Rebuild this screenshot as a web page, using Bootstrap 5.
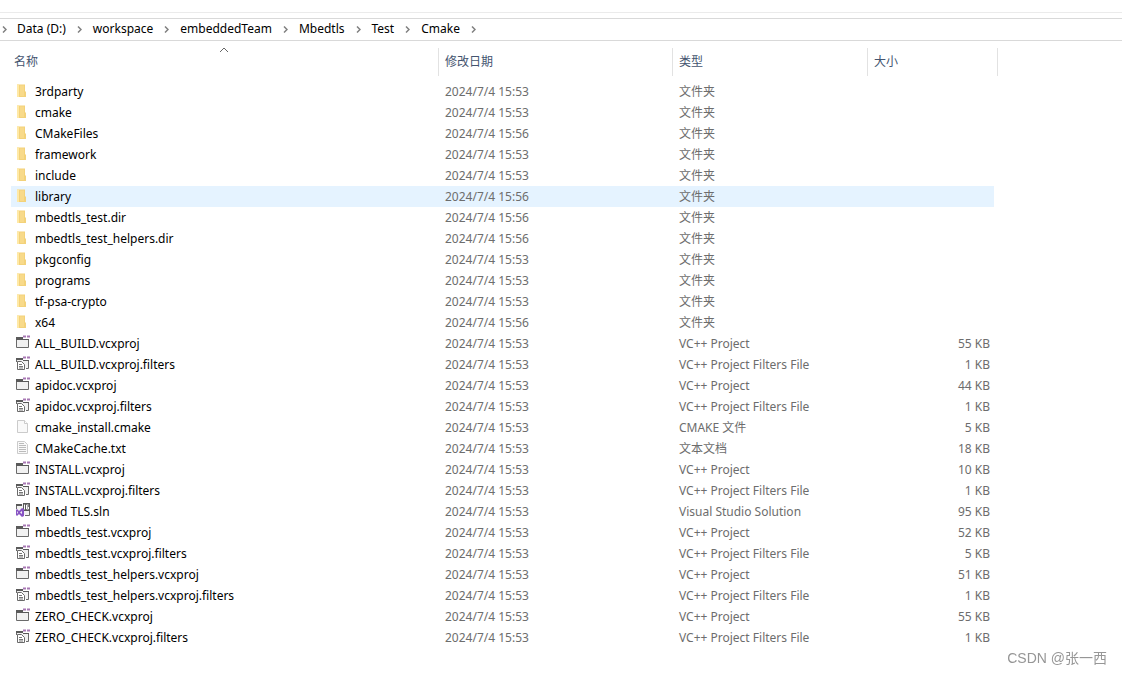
<!DOCTYPE html>
<html lang="zh-CN">
<head>
<meta charset="utf-8">
<meta name="viewport" content="width=device-width, initial-scale=1">
<title>Cmake</title>
<link href="https://cdn.jsdelivr.net/npm/bootstrap@5.3.0/dist/css/bootstrap.min.css" rel="stylesheet">
<style>
body{font-family:"Noto Sans","Noto Sans CJK SC",sans-serif;font-size:12px;line-height:20px;color:#000;background:#fff}
.ribbon-edge{height:13px;border-bottom:1px solid #ebebeb}
.address-bar{margin-top:5px;border-top:1px solid #d9d9d9;border-bottom:1px solid #d9d9d9;height:23px}
.address-bar a{color:#000;text-decoration:none;font-size:12px;line-height:20px}
.chev{width:27px;height:21px;display:block;flex:none}
.chev.first{width:17px}
.file-pane{padding-left:11px;padding-right:124px}
.file-table{table-layout:fixed;width:100%;border-collapse:collapse}
.file-table th{padding:7px 0 5px;font-weight:400;position:relative}
.head-cell{height:28px;border-right:1px solid #e2e2e2;padding-left:6px}
.head-cell button{color:#44546f;font-size:12px;line-height:28px;background:none;border:0;padding:0;display:block}
.file-table th:first-child .head-cell{padding-left:3px}
.sort-mark{position:absolute;top:5px;left:50%;margin-left:-6px}
.file-table td{height:21px;line-height:20px;padding:1px 0 0 6px;color:#6d6d6d;white-space:nowrap}
.file-table td:first-child{color:#000;padding-left:4px}
.file-table td:nth-child(4){text-align:right;padding-right:4px}
.file-table .hovered td{background:#e5f3ff}
.file-table td svg{width:16px;height:16px;display:block;margin:0 4px 4px 0;flex:none}
.c-date{width:234px}.c-type{width:195px}.c-size{width:126px}.c-end{width:4px}
.watermark{position:fixed;right:15px;bottom:6px;color:#969696;font-family:"Liberation Sans","Noto Sans CJK SC",sans-serif;font-size:14px;line-height:20px}
</style>
</head>
<body>
<svg width="0" height="0" class="d-none" aria-hidden="true">
<symbol id="folder" viewBox="0 0 16 16"><path fill="#f3d27a" d="M2 2.500h8v7h1V15H2z"/><path fill="#ffe9a6" d="M2 2.500h2V15H2z"/><path fill="#f8da8a" d="M5 3.500h4V14H5z"/></symbol>
<symbol id="proj" viewBox="0 0 16 16"><path fill="#f1f1f1" d="M2 6h11v7H2z"/><path fill="none" stroke="#6a6a6a" d="M1.500 4v9.500h12V6"/><path fill="#5a5a5a" d="M1 3h7v3H1zM8 5h6v1H8z"/><path fill="#a878b4" d="M8 1.500h3v2H8zM12 1.500h3v2h-3z"/></symbol>
<symbol id="filt" viewBox="0 0 16 16"><path fill="#f1f1f1" d="M2 5h11v8H2z"/><path fill="none" stroke="#6a6a6a" d="M1.500 7V4M13.500 6v7.500H11"/><path fill="#5a5a5a" d="M1 3h7v2H1zM8 5h6v1H8z"/><path fill="#fff" stroke="#6a6a6a" d="M2.500 6.500h4l3 3v5h-7z"/><path stroke="#777" d="M4 9.500h3M4 11.500h4M4 13h4"/><path fill="#a878b4" d="M8 1.500h3v2H8zM12 1.500h3v2h-3z"/></symbol>
<symbol id="blank" viewBox="0 0 16 16"><path fill="#f9f9f9" stroke="#cbcbcb" d="M2.500 2.500h7l3 3v9h-10z"/><path fill="#fff" stroke="#cbcbcb" d="M9.500 2.500v3h3"/></symbol>
<symbol id="text" viewBox="0 0 16 16"><path fill="#f9f9f9" stroke="#cbcbcb" d="M2.500 2.500h7l3 3v9h-10z"/><path stroke="#bbb" d="M4 4.500h5M4 6.500h7M4 8.500h7M4 10.500h7M4 12.500h7"/></symbol>
<symbol id="sln" viewBox="0 0 16 16"><path fill="#f1f1f1" d="M1 2h13v11H1z"/><path fill="none" stroke="#6a6a6a" d="M1.500 7V2.500H7M14.500 9v4.500H10"/><path fill="#5a5a5a" d="M1 2h6v2H1zM8 1h7v8H8z"/><path stroke="#fff" fill="none" d="M9.500 2.500v5M13.500 3h-2v4h2V5h-2"/><path fill="#8854c4" fill-rule="evenodd" d="M7 6l2 1v7l-2 1-3-3-2 2-1-1V8l1-1 2 2zM7 9l-2 1.500L7 12zM2 9v3l1-1.500z"/></symbol>
<symbol id="chevron" viewBox="0 0 5 7"><path d="M1 .5l3 3-3 3" fill="none" stroke="#808080" stroke-width="1.500"/></symbol>
</svg>
<div class="ribbon-edge"></div>
<nav class="address-bar" aria-label="路径">
<ol class="d-flex list-unstyled m-0">
<li class="d-flex"><svg class="chev first"><use href="#chevron" x="2" y="7" width="5" height="7"/></svg><a href="#">Data (D:)</a><svg class="chev"><use href="#chevron" x="11" y="7" width="5" height="7"/></svg></li>
<li class="d-flex"><a href="#">workspace</a><svg class="chev"><use href="#chevron" x="11" y="7" width="5" height="7"/></svg></li>
<li class="d-flex"><a href="#">embeddedTeam</a><svg class="chev"><use href="#chevron" x="11" y="7" width="5" height="7"/></svg></li>
<li class="d-flex"><a href="#">Mbedtls</a><svg class="chev"><use href="#chevron" x="11" y="7" width="5" height="7"/></svg></li>
<li class="d-flex"><a href="#">Test</a><svg class="chev"><use href="#chevron" x="11" y="7" width="5" height="7"/></svg></li>
<li class="d-flex"><a href="#">Cmake</a><svg class="chev"><use href="#chevron" x="11" y="7" width="5" height="7"/></svg></li>
</ol>
</nav>
<main class="file-pane">
<table class="file-table">
<colgroup><col><col class="c-date"><col class="c-type"><col class="c-size"><col class="c-end"></colgroup>
<thead><tr>
<th><svg class="sort-mark" width="10" height="8" viewBox="0 0 10 8"><path d="M1 6l4-4 4 4" fill="none" stroke="#666"/></svg><div class="head-cell"><button type="button">名称</button></div></th>
<th><div class="head-cell"><button type="button">修改日期</button></div></th>
<th><div class="head-cell"><button type="button">类型</button></div></th>
<th colspan="2"><div class="head-cell"><button type="button">大小</button></div></th>
</tr></thead>
<tbody>
<tr><td><div class="d-flex align-items-center"><svg><use href="#folder"/></svg>3rdparty</div></td><td>2024/7/4 15:53</td><td>文件夹</td><td></td></tr>
<tr><td><div class="d-flex align-items-center"><svg><use href="#folder"/></svg>cmake</div></td><td>2024/7/4 15:53</td><td>文件夹</td><td></td></tr>
<tr><td><div class="d-flex align-items-center"><svg><use href="#folder"/></svg>CMakeFiles</div></td><td>2024/7/4 15:56</td><td>文件夹</td><td></td></tr>
<tr><td><div class="d-flex align-items-center"><svg><use href="#folder"/></svg>framework</div></td><td>2024/7/4 15:53</td><td>文件夹</td><td></td></tr>
<tr><td><div class="d-flex align-items-center"><svg><use href="#folder"/></svg>include</div></td><td>2024/7/4 15:53</td><td>文件夹</td><td></td></tr>
<tr class="hovered"><td><div class="d-flex align-items-center"><svg><use href="#folder"/></svg>library</div></td><td>2024/7/4 15:56</td><td>文件夹</td><td></td></tr>
<tr><td><div class="d-flex align-items-center"><svg><use href="#folder"/></svg>mbedtls_test.dir</div></td><td>2024/7/4 15:56</td><td>文件夹</td><td></td></tr>
<tr><td><div class="d-flex align-items-center"><svg><use href="#folder"/></svg>mbedtls_test_helpers.dir</div></td><td>2024/7/4 15:56</td><td>文件夹</td><td></td></tr>
<tr><td><div class="d-flex align-items-center"><svg><use href="#folder"/></svg>pkgconfig</div></td><td>2024/7/4 15:53</td><td>文件夹</td><td></td></tr>
<tr><td><div class="d-flex align-items-center"><svg><use href="#folder"/></svg>programs</div></td><td>2024/7/4 15:53</td><td>文件夹</td><td></td></tr>
<tr><td><div class="d-flex align-items-center"><svg><use href="#folder"/></svg>tf-psa-crypto</div></td><td>2024/7/4 15:53</td><td>文件夹</td><td></td></tr>
<tr><td><div class="d-flex align-items-center"><svg><use href="#folder"/></svg>x64</div></td><td>2024/7/4 15:56</td><td>文件夹</td><td></td></tr>
<tr><td><div class="d-flex align-items-center"><svg><use href="#proj"/></svg>ALL_BUILD.vcxproj</div></td><td>2024/7/4 15:53</td><td>VC++ Project</td><td>55 KB</td></tr>
<tr><td><div class="d-flex align-items-center"><svg><use href="#filt"/></svg>ALL_BUILD.vcxproj.filters</div></td><td>2024/7/4 15:53</td><td>VC++ Project Filters File</td><td>1 KB</td></tr>
<tr><td><div class="d-flex align-items-center"><svg><use href="#proj"/></svg>apidoc.vcxproj</div></td><td>2024/7/4 15:53</td><td>VC++ Project</td><td>44 KB</td></tr>
<tr><td><div class="d-flex align-items-center"><svg><use href="#filt"/></svg>apidoc.vcxproj.filters</div></td><td>2024/7/4 15:53</td><td>VC++ Project Filters File</td><td>1 KB</td></tr>
<tr><td><div class="d-flex align-items-center"><svg><use href="#blank"/></svg>cmake_install.cmake</div></td><td>2024/7/4 15:53</td><td>CMAKE 文件</td><td>5 KB</td></tr>
<tr><td><div class="d-flex align-items-center"><svg><use href="#text"/></svg>CMakeCache.txt</div></td><td>2024/7/4 15:53</td><td>文本文档</td><td>18 KB</td></tr>
<tr><td><div class="d-flex align-items-center"><svg><use href="#proj"/></svg>INSTALL.vcxproj</div></td><td>2024/7/4 15:53</td><td>VC++ Project</td><td>10 KB</td></tr>
<tr><td><div class="d-flex align-items-center"><svg><use href="#filt"/></svg>INSTALL.vcxproj.filters</div></td><td>2024/7/4 15:53</td><td>VC++ Project Filters File</td><td>1 KB</td></tr>
<tr><td><div class="d-flex align-items-center"><svg><use href="#sln"/></svg>Mbed TLS.sln</div></td><td>2024/7/4 15:53</td><td>Visual Studio Solution</td><td>95 KB</td></tr>
<tr><td><div class="d-flex align-items-center"><svg><use href="#proj"/></svg>mbedtls_test.vcxproj</div></td><td>2024/7/4 15:53</td><td>VC++ Project</td><td>52 KB</td></tr>
<tr><td><div class="d-flex align-items-center"><svg><use href="#filt"/></svg>mbedtls_test.vcxproj.filters</div></td><td>2024/7/4 15:53</td><td>VC++ Project Filters File</td><td>5 KB</td></tr>
<tr><td><div class="d-flex align-items-center"><svg><use href="#proj"/></svg>mbedtls_test_helpers.vcxproj</div></td><td>2024/7/4 15:53</td><td>VC++ Project</td><td>51 KB</td></tr>
<tr><td><div class="d-flex align-items-center"><svg><use href="#filt"/></svg>mbedtls_test_helpers.vcxproj.filters</div></td><td>2024/7/4 15:53</td><td>VC++ Project Filters File</td><td>1 KB</td></tr>
<tr><td><div class="d-flex align-items-center"><svg><use href="#proj"/></svg>ZERO_CHECK.vcxproj</div></td><td>2024/7/4 15:53</td><td>VC++ Project</td><td>55 KB</td></tr>
<tr><td><div class="d-flex align-items-center"><svg><use href="#filt"/></svg>ZERO_CHECK.vcxproj.filters</div></td><td>2024/7/4 15:53</td><td>VC++ Project Filters File</td><td>1 KB</td></tr>
</tbody>
</table>
</main>
<div class="watermark">CSDN @张一西</div>
<script src="https://cdn.jsdelivr.net/npm/bootstrap@5.3.0/dist/js/bootstrap.bundle.min.js"></script>
</body>
</html>
